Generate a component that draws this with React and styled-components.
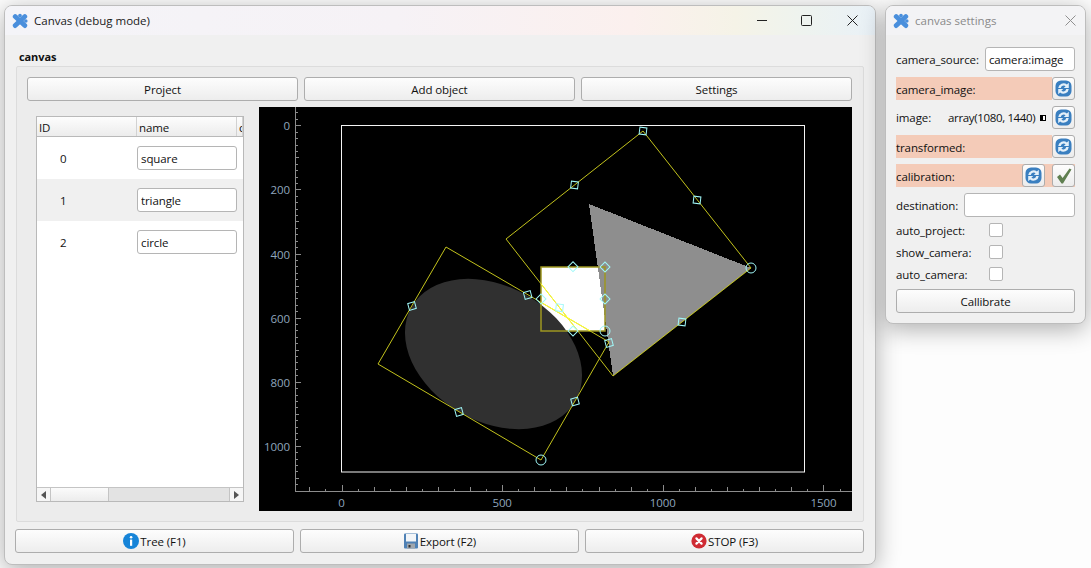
import React from "react";
import styled, { createGlobalStyle } from "styled-components";

const Global = createGlobalStyle`
  html, body { margin: 0; padding: 0; width: 1091px; height: 568px; overflow: hidden; background: #fdfdfd; }
  * { box-sizing: border-box; }
  body { font-family: "Open Sans", "Noto Sans", "Liberation Sans", sans-serif; font-size: 11.5px; letter-spacing: -0.1px; color: #111; }
`;

const Desktop = styled.div`
  position: relative;
  width: 1091px;
  height: 568px;
  overflow: hidden;
`;

const Win = styled.section`
  position: absolute;
  left: ${(p) => p.$x}px;
  top: ${(p) => p.$y}px;
  width: ${(p) => p.$w}px;
  height: ${(p) => p.$h}px;
  display: flex;
  flex-direction: column;
  background: #f0f0f0;
  border: 1px solid #bdbdbd;
  border-radius: 8px;
  box-shadow: 0 5px 24px rgba(0, 0, 0, 0.32);
  overflow: hidden;
`;

const TitleBar = styled.header`
  flex: 0 0 29px;
  display: flex;
  align-items: center;
  padding-left: ${(p) => p.$pad}px;
  gap: ${(p) => p.$gap}px;
  background: ${(p) =>
    p.$tinted
      ? "linear-gradient(90deg,#f4f4f8 0%,#f6f2f6 45%,#fbf0ee 72%,#f5f3e7 84%,#eef3ef 92%,#e9f1f7 100%)"
      : "#f3f3f5"};
`;

const TitleText = styled.span`
  flex: 1;
  letter-spacing: 0;
  color: ${(p) => (p.$dim ? "#8a8a8a" : "#1a1a1a")};
`;

const WinCtl = styled.svg`
  display: block;
  flex: none;
  margin-right: ${(p) => p.$mr}px;
`;

const Content = styled.div`
  flex: 1;
  display: flex;
  flex-direction: column;
  padding: 0 11px 11px 10px;
`;

const GroupTitle = styled.div`
  flex: 0 0 31px;
  display: flex;
  align-items: flex-end;
  padding: 0 0 2px 4px;
  font-weight: 700;
  font-size: 11px;
`;

const Group = styled.div`
  flex: 0 0 456px;
  margin-left: 1px;
  display: flex;
  flex-direction: column;
  gap: 6px;
  padding: 10px 11px 10px 10px;
  background: #ececec;
  border: 1px solid #dcdcdc;
  border-radius: 2px;
`;

const Toolbar = styled.div`
  display: grid;
  grid-template-columns: repeat(3, 1fr);
  gap: ${(p) => p.$gap}px;
  flex: none;
`;

const Btn = styled.button`
  height: ${(p) => p.$h || 24}px;
  display: flex;
  align-items: center;
  justify-content: center;
  gap: 1px;
  padding: 0;
  font: inherit;
  letter-spacing: inherit;
  color: #111;
  background: linear-gradient(#fdfdfd, #ededed);
  border: 1px solid #adadad;
  border-radius: 3px;
`;

const Panels = styled.div`
  flex: 1;
  display: flex;
  min-height: 0;
`;

const TableSlot = styled.div`
  flex: 0 0 232px;
  padding: 9px 15px 9px 9px;
  display: flex;
`;

const Table = styled.div`
  flex: 1;
  display: flex;
  flex-direction: column;
  background: #fff;
  border: 1px solid #b9b9b9;
`;

const HeadRow = styled.div`
  flex: 0 0 20px;
  display: grid;
  grid-template-columns: 100px 100px 1fr;
  background: linear-gradient(#fdfdfd, #ececec);
  border-bottom: 1px solid #b9b9b9;
  overflow: hidden;
`;

const HeadCell = styled.div`
  padding: 2px 0 0 2px;
  border-right: 1px solid #d2d2d2;
  overflow: hidden;
  line-height: 18px;
`;

const Row = styled.div`
  flex: 0 0 42px;
  display: grid;
  grid-template-columns: 100px 100px;
  align-items: center;
  background: ${(p) => (p.$alt ? "#f0f0f0" : "#fff")};
`;

const IdCell = styled.div`
  text-align: left;
  padding-left: 23px;
`;

const Field = styled.input`
  width: ${(p) => (p.$w ? `${p.$w}px` : "100%")};
  height: 24px;
  flex: ${(p) => (p.$grow ? 1 : "none")};
  min-width: 0;
  padding: 0 2px 0 3px;
  font: inherit;
  letter-spacing: inherit;
  color: #111;
  background: #fff;
  border: 1px solid #b5b5b5;
  border-radius: 3px;
  outline: none;
`;

const Spacer = styled.div`
  flex: 1;
`;

const HScroll = styled.div`
  flex: 0 0 14px;
  display: flex;
  border-top: 1px solid #c4c4c4;
  background: #e3e3e3;
`;

const ScrollArrow = styled.div`
  flex: 0 0 14px;
  display: flex;
  align-items: center;
  justify-content: center;
  background: #f6f6f6;
  border-${(p) => (p.$right ? "left" : "right")}: 1px solid #c4c4c4;
`;

const ScrollThumb = styled.div`
  flex: 0 0 58px;
  background: linear-gradient(#fbfbfb, #ececec);
  border-right: 1px solid #c4c4c4;
`;

const ArrowTip = styled.span`
  width: 0;
  height: 0;
  border-top: 4px solid transparent;
  border-bottom: 4px solid transparent;
  ${(p) => (p.$right ? "border-left: 5px solid #555;" : "border-right: 5px solid #555;")}
`;

const PlotSvg = styled.svg`
  display: block;
  flex: none;
  width: 593px;
  height: 404px;
  background: #000;
`;

const AxisLabel = styled.text`
  font-family: "Open Sans", "Noto Sans", sans-serif;
  font-size: 11.5px;
  fill: #8fa6bd;
`;

const Footer = styled.div`
  flex: none;
  margin-top: 7px;
`;

const SettingsBody = styled.div`
  flex: 1;
  display: flex;
  flex-direction: column;
  gap: 6px;
  padding: 12px 10px 9px 10px;
`;

const SetRow = styled.div`
  height: ${(p) => p.$h || 23}px;
  display: flex;
  align-items: center;
  gap: ${(p) => p.$gap || 0}px;
  flex: none;
`;

const Label = styled.span`
  white-space: nowrap;
  flex: ${(p) => (p.$grow ? 1 : "none")};
  ${(p) => (p.$w ? `width: ${p.$w}px;` : "")}
`;

const Band = styled.div`
  height: 23px;
  flex: 1;
  display: flex;
  align-items: center;
  background: #f4cbb8;
`;

const BandLabel = styled(Label)`
  padding-top: 1px;
`;

const IconBtn = styled.button`
  flex: none;
  width: 23px;
  height: 23px;
  padding: 0;
  display: flex;
  align-items: center;
  justify-content: center;
  background: linear-gradient(#fdfdfd, #ececec);
  border: 1px solid #adadad;
  border-radius: 3px;
`;

const BandBtn = styled(IconBtn)`
  margin-right: ${(p) => p.$mr || 0}px;
`;

const ArrayValue = styled.span`
  flex: 1;
  min-width: 0;
  white-space: nowrap;
  letter-spacing: -0.35px;
`;

const Swatch = styled.span`
  flex: none;
  width: 6px;
  height: 6px;
  margin-right: 6px;
  background: linear-gradient(90deg, #000 50%, #fff 50%);
  border: 1px solid #000;
`;

const CheckList = styled.div`
  display: flex;
  flex-direction: column;
  gap: 8px;
  margin-bottom: 2px;
`;

const CheckRow = styled.label`
  height: 14px;
  display: flex;
  align-items: center;
`;

const Check = styled.input`
  appearance: none;
  width: 14px;
  height: 14px;
  margin: 0;
  background: #fff;
  border: 1px solid #b5b5b5;
  border-radius: 2px;
`;

const Puzzle = ({ size = 16, color = "#4a8fdc" }) => (
  <svg width={size} height={size} viewBox="0 0 16 16" style={{ flex: "none" }}>
    <g stroke={color} strokeWidth="4.8" strokeLinecap="round">
      <line x1="8" y1="8" x2="3.2" y2="3.6" />
      <line x1="8" y1="8" x2="12.8" y2="3.6" />
      <line x1="8" y1="8" x2="3.2" y2="12.6" />
      <line x1="8" y1="8" x2="12.8" y2="12.6" />
    </g>
    <g fill={color}>
      <circle cx="8" cy="2.6" r="1.8" />
      <circle cx="13.8" cy="8" r="1.8" />
    </g>
  </svg>
);

const Refresh = () => (
  <svg width="17" height="17" viewBox="0 0 17 17">
    <rect x="0.5" y="0.5" width="16" height="16" rx="5.5" fill="#3a7fc0" />
    <path d="M3.2 8 A5.4 5.4 0 0 1 11.9 4.4 L13.8 2.8 V8 H8.8 L10.6 6.2 A3 3 0 0 0 5.8 8 Z" fill="#e4f0f9" />
    <path d="M13.8 9 A5.4 5.4 0 0 1 5.1 12.6 L3.2 14.2 V9 H8.2 L6.4 10.8 A3 3 0 0 0 11.2 9 Z" fill="#e4f0f9" />
  </svg>
);

const CheckMark = () => (
  <svg width="18" height="18" viewBox="0 0 18 18">
    <path d="M2 10 L5 7.5 L7.6 11 L14.5 1.5 L16.5 2.5 L8 16.5 L6.5 16.5 Z" fill="#5f7f50" />
  </svg>
);

const InfoIcon = () => (
  <svg width="16" height="16" viewBox="0 0 16 16">
    <circle cx="8" cy="8" r="8" fill="#1684d8" />
    <rect x="7" y="6.6" width="2.2" height="6.2" fill="#fff" />
    <circle cx="8.1" cy="4.3" r="1.3" fill="#fff" />
  </svg>
);

const SaveIcon = () => (
  <svg width="16" height="16" viewBox="0 0 16 16">
    <rect x="1" y="0.5" width="14" height="15" rx="1" fill="#4f81b5" />
    <rect x="3" y="1" width="10" height="7.5" fill="#f2f5f8" />
    <rect x="4" y="10.5" width="8" height="5" fill="#9fa6ad" />
    <rect x="5.5" y="12" width="2" height="2.5" fill="#333" />
  </svg>
);

const StopIcon = () => (
  <svg width="16" height="16" viewBox="0 0 16 16">
    <circle cx="8" cy="8" r="7.6" fill="#cf2b33" />
    <path d="M5.4 5.4 L10.6 10.6 M10.6 5.4 L5.4 10.6" stroke="#fff" strokeWidth="2.2" strokeLinecap="round" />
  </svg>
);

const X0 = 341.5, XS = 0.3213, Y0 = 125.8, YS = 0.3205;
const range = (a, b, s) => {
  const out = [];
  for (let v = a; v <= b; v += s) out.push(v);
  return out;
};

const Diamond = ({ x, y, a = 45, s = 7 }) => (
  <rect
    x={x - s / 2}
    y={y - s / 2}
    width={s}
    height={s}
    transform={`rotate(${a} ${x} ${y})`}
    fill="none"
    stroke="#a0f8f8"
    strokeWidth="1"
  />
);

const Ring = ({ x, y }) => <circle cx={x} cy={y} r="5" fill="none" stroke="#a0f8f8" strokeWidth="1" />;

const rectA = "446,247 609,342 541,460 378,364";
const rectB = "643,131 751,268 613,376 506,239";

const Plot = () => (
  <PlotSvg viewBox="259 107 593 404">
    <defs>
      <mask id="whiteArea" maskUnits="userSpaceOnUse" x="259" y="107" width="593" height="404">
        <rect x="541" y="267" width="64" height="64" fill="#fff" />
        <polygon points="589,204 751,268 613,376" fill="#000" />
        <ellipse cx="493.5" cy="354" rx="94.5" ry="67.5" transform="rotate(30 493.5 354)" fill="#000" />
      </mask>
    </defs>
    <rect x="341.5" y="125.5" width="463" height="346.5" fill="none" stroke="#f4f4f4" strokeWidth="1" />
    <rect x="541" y="267" width="64" height="64" fill="#fff" shapeRendering="crispEdges" />
    <polygon points="589,204 751,268 613,376" fill="#8e8e8e" shapeRendering="crispEdges" />
    <ellipse cx="493.5" cy="354" rx="94.5" ry="67.5" transform="rotate(30 493.5 354)" fill="#303030" />
    <rect x="541" y="267" width="64" height="64" fill="none" stroke="#9d9620" strokeWidth="1.5" />
    <polygon points={rectA} fill="none" stroke="#c2c21c" strokeWidth="1" />
    <polygon points={rectB} fill="none" stroke="#c2c21c" strokeWidth="1" />
    <g mask="url(#whiteArea)">
      <polygon points={rectA} fill="none" stroke="#ffff30" strokeWidth="1" />
      <polygon points={rectB} fill="none" stroke="#ffff30" strokeWidth="1" />
    </g>

    {[[573, 266.7], [605, 299], [573, 331], [541, 299], [605, 267]].map(([x, y]) => (
      <Diamond key={`s${x}-${y}`} x={x} y={y} />
    ))}
    <Ring x={605} y={331} />
    {[[412, 306], [459, 412], [575, 401.5], [527.7, 295], [609, 343]].map(([x, y]) => (
      <Diamond key={`c${x}`} x={x} y={y} a={75} />
    ))}
    <Ring x={541} y={460} />
    {[[643, 131], [697, 200], [682, 322], [559.5, 307.7], [574.5, 185]].map(([x, y]) => (
      <Diamond key={`t${x}`} x={x} y={y} a={97} />
    ))}
    <Ring x={751} y={268} />

    <g stroke="#8c8c8c" strokeWidth="1" shapeRendering="crispEdges">
      <line x1="295" y1="107" x2="295" y2="491.5" />
      <line x1="295" y1="491.5" x2="852" y2="491.5" />
      {range(-40, 1140, 20).map((v) => {
        const y = Math.round(Y0 - 0.5 + v * YS) + 0.5;
        const len = v % 200 === 0 ? 6 : v % 100 === 0 ? 4 : 3;
        return <line key={v} x1="295" y1={y} x2={295 + len} y2={y} />;
      })}
      {range(-100, 1550, 50).map((v) => {
        const x = Math.round(X0 + v * XS) + 0.5;
        const len = v % 500 === 0 ? 6 : v % 100 === 0 ? 4 : 2;
        return <line key={v} x1={x} y1="491" x2={x} y2={491 - len} />;
      })}
    </g>
    {range(0, 1000, 200).map((v) => (
      <AxisLabel key={v} x="290" y={Y0 + v * YS + 4.5} textAnchor="end">
        {v}
      </AxisLabel>
    ))}
    {[0, 500, 1000, 1500].map((v) => (
      <AxisLabel key={v} x={X0 + v * XS} y="507" textAnchor="middle">
        {v}
      </AxisLabel>
    ))}
  </PlotSvg>
);

export default function App() {
  return (
    <Desktop>
      <Global />
      <Win $x={4} $y={5} $w={872} $h={560}>
        <TitleBar $tinted $pad={7} $gap={6}>
          <Puzzle />
          <TitleText>Canvas (debug mode)</TitleText>
          <WinCtl $mr={28} width="10" height="10" viewBox="0 0 10 10">
            <line x1="0" y1="4.5" x2="10" y2="4.5" stroke="#222" />
          </WinCtl>
          <WinCtl $mr={29} width="11" height="11" viewBox="0 0 11 11">
            <rect x="0.5" y="0.5" width="10" height="10" rx="1" fill="none" stroke="#222" />
          </WinCtl>
          <WinCtl $mr={17} width="11" height="11" viewBox="0 0 11 11">
            <path d="M0.5 0.5 L10.5 10.5 M10.5 0.5 L0.5 10.5" stroke="#222" />
          </WinCtl>
        </TitleBar>
        <Content>
          <GroupTitle>canvas</GroupTitle>
          <Group>
            <Toolbar $gap={6}>
              <Btn>Project</Btn>
              <Btn>Add object</Btn>
              <Btn>Settings</Btn>
            </Toolbar>
            <Panels>
              <TableSlot>
                <Table>
                  <HeadRow>
                    <HeadCell>ID</HeadCell>
                    <HeadCell>name</HeadCell>
                    <HeadCell>c</HeadCell>
                  </HeadRow>
                  {[["0", "square"], ["1", "triangle"], ["2", "circle"]].map(([id, name], i) => (
                    <Row key={id} $alt={i === 1}>
                      <IdCell>{id}</IdCell>
                      <Field defaultValue={name} />
                    </Row>
                  ))}
                  <Spacer />
                  <HScroll>
                    <ScrollArrow>
                      <ArrowTip />
                    </ScrollArrow>
                    <ScrollThumb />
                    <Spacer />
                    <ScrollArrow $right>
                      <ArrowTip $right />
                    </ScrollArrow>
                  </HScroll>
                </Table>
              </TableSlot>
              <Plot />
            </Panels>
          </Group>
          <Footer>
            <Toolbar $gap={6}>
              <Btn>
                <InfoIcon />
                Tree (F1)
              </Btn>
              <Btn>
                <SaveIcon />
                Export (F2)
              </Btn>
              <Btn>
                <StopIcon />
                STOP (F3)
              </Btn>
            </Toolbar>
          </Footer>
        </Content>
      </Win>

      <Win $x={885} $y={5} $w={201} $h={319}>
        <TitleBar $pad={7} $gap={6}>
          <Puzzle />
          <TitleText $dim>canvas settings</TitleText>
          <WinCtl $mr={9} width="11" height="11" viewBox="0 0 11 11">
            <path d="M0.5 0.5 L10.5 10.5 M10.5 0.5 L0.5 10.5" stroke="#8f8f8f" />
          </WinCtl>
        </TitleBar>
        <SettingsBody>
          <SetRow $h={24} $gap={6}>
            <Label>camera_source:</Label>
            <Field $grow defaultValue="camera:image" />
          </SetRow>
          <SetRow>
            <Band>
              <BandLabel>camera_image:</BandLabel>
            </Band>
            <IconBtn>
              <Refresh />
            </IconBtn>
          </SetRow>
          <SetRow>
            <Label $w={52}>image:</Label>
            <ArrayValue>array(1080, 1440)</ArrayValue>
            <Swatch />
            <IconBtn>
              <Refresh />
            </IconBtn>
          </SetRow>
          <SetRow>
            <Band>
              <BandLabel>transformed:</BandLabel>
            </Band>
            <IconBtn>
              <Refresh />
            </IconBtn>
          </SetRow>
          <SetRow>
            <Band>
              <BandLabel $grow>calibration:</BandLabel>
              <BandBtn $mr={7}>
                <Refresh />
              </BandBtn>
              <BandBtn>
                <CheckMark />
              </BandBtn>
            </Band>
          </SetRow>
          <SetRow $h={24} $gap={6}>
            <Label>destination:</Label>
            <Field $grow />
          </SetRow>
          <CheckList>
            {["auto_project:", "show_camera:", "auto_camera:"].map((t) => (
              <CheckRow key={t}>
                <Label $w={93}>{t}</Label>
                <Check type="checkbox" />
              </CheckRow>
            ))}
          </CheckList>
          <Btn>Callibrate</Btn>
        </SettingsBody>
      </Win>
    </Desktop>
  );
}
